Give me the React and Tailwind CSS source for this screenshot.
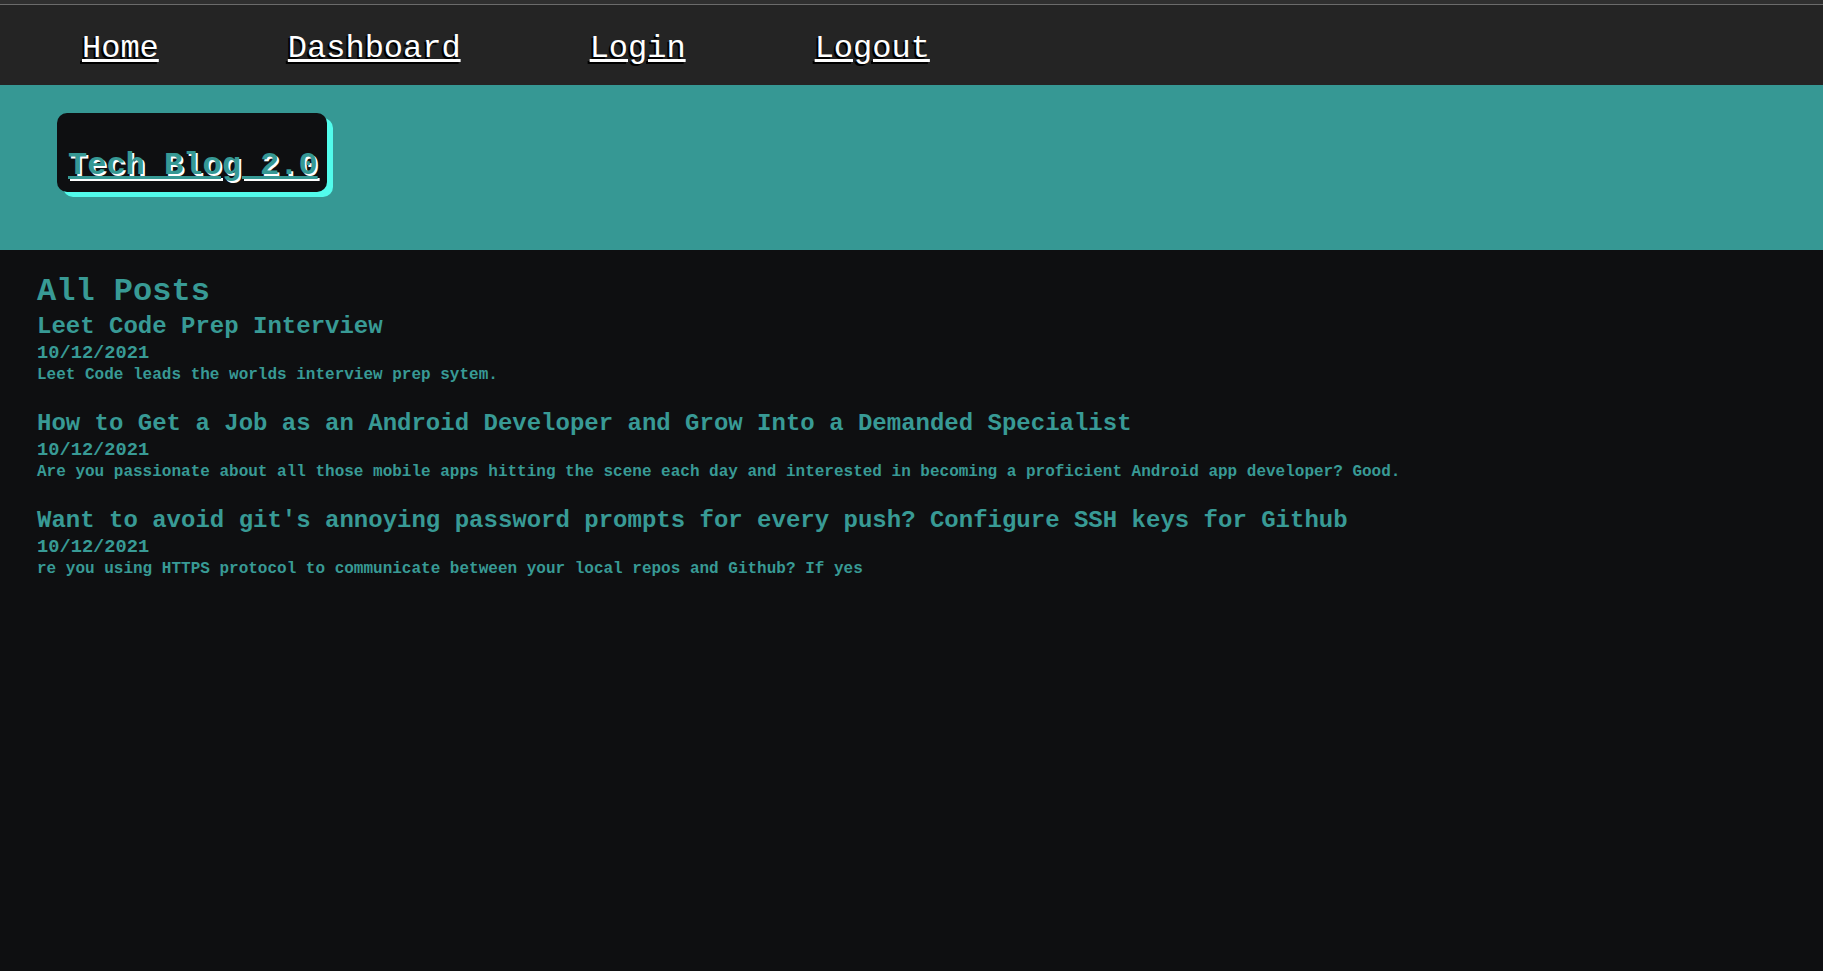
const posts = [
  {
    id: 1,
    title: 'Leet Code Prep Interview',
    date: '10/12/2021',
    body: 'Leet Code leads the worlds interview prep sytem.',
  },
  {
    id: 2,
    title: 'How to Get a Job as an Android Developer and Grow Into a Demanded Specialist',
    date: '10/12/2021',
    body: 'Are you passionate about all those mobile apps hitting the scene each day and interested in becoming a proficient Android app developer? Good.',
  },
  {
    id: 3,
    title: "Want to avoid git's annoying password prompts for every push? Configure SSH keys for Github",
    date: '10/12/2021',
    body: 're you using HTTPS protocol to communicate between your local repos and Github? If yes',
  },
];

const links = ['Home', 'Dashboard', 'Login', 'Logout'];

const App = () => {
  return (
    <div className="min-h-screen w-full bg-[#0e0f11] font-['Liberation_Mono','Courier_New',monospace]">
      <div className="h-[4px] bg-[#2f2f2f]" />
      <div className="h-px bg-[#6b6b6b]" />

      <nav className="flex h-[80px] items-center gap-[129px] bg-[#242424] pl-[82px] pt-[7px]">
        {links.map(link => (
          <a
            key={link}
            href="#"
            className="text-[32px] leading-[36px] text-white underline [text-shadow:-2px_2px_0_#000]"
          >
            {link}
          </a>
        ))}
      </nav>

      <header className="h-[165px] bg-[#369894] pl-[57px] pt-[28px]">
        <div className="inline-block rounded-[10px] bg-[#0e0f11] pb-[8px] pl-[11px] pr-[9px] pt-[35px] shadow-[6px_5px_0_#52fcec]">
          <a
            href="#"
            className="block text-[32px] font-bold leading-[36px] text-[#369894] underline [text-shadow:2px_2px_0_#fff]"
          >
            Tech Blog 2.0
          </a>
        </div>
      </header>

      <main className="pl-[37px] pt-[24px] font-bold text-[#389a95]">
        <h1 className="mb-[3px] text-[32px] leading-[36px]">All Posts</h1>
        <div className="flex flex-col gap-[25px]">
          {posts.map(p => (
            <div key={p.id}>
              <h2 className="text-[24px] leading-[28px]">{p.title}</h2>
              <h3 className="text-[18.72px] leading-[24px]">{p.date}</h3>
              <p className="text-[16px] leading-[20px]">{p.body}</p>
            </div>
          ))}
        </div>
      </main>
    </div>
  );
};

export default App;
